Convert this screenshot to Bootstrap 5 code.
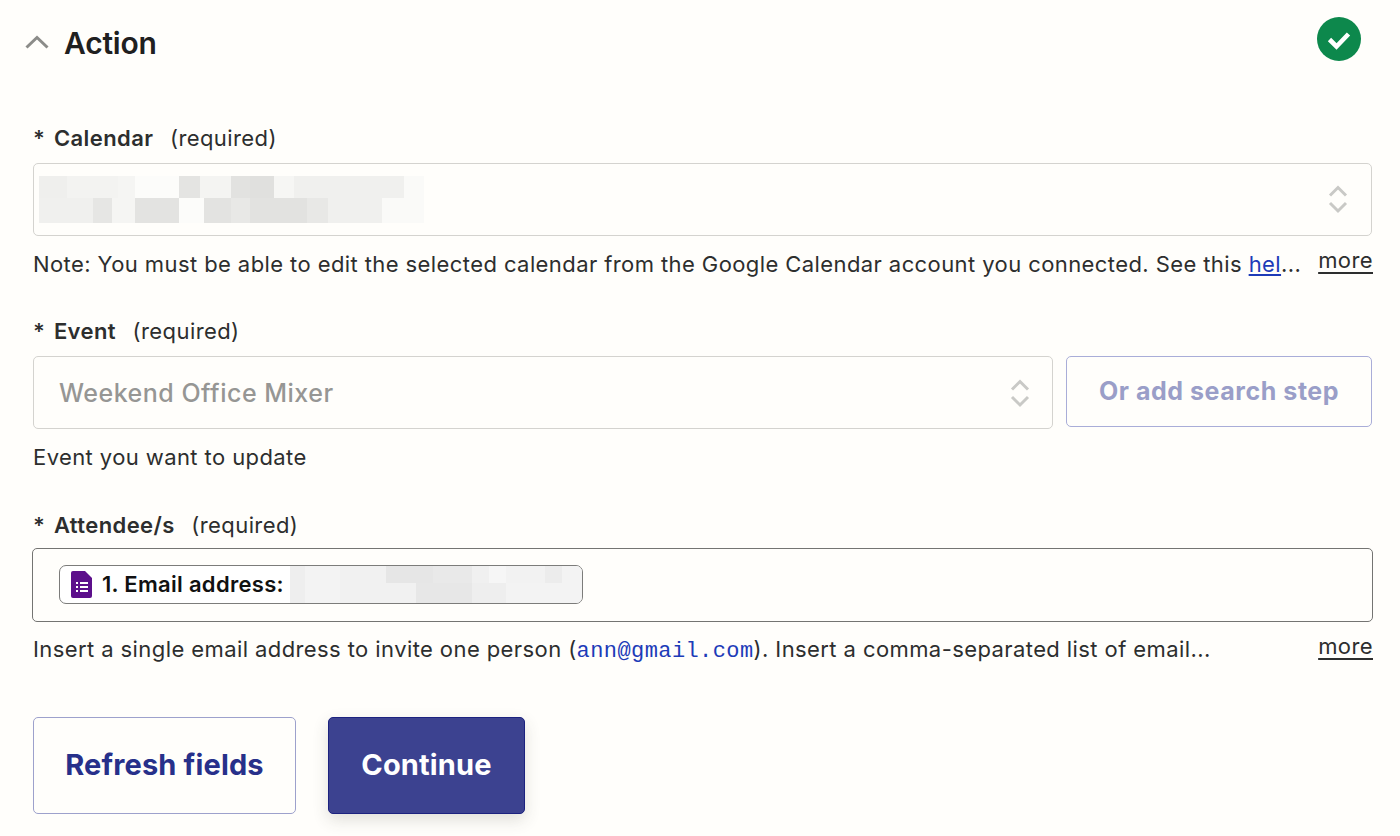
<!DOCTYPE html>
<html lang="en">
<head>
<meta charset="utf-8">
<title>Action</title>
<link rel="stylesheet" href="https://cdn.jsdelivr.net/npm/bootstrap@5.3.0/dist/css/bootstrap.min.css">
<style>
html,body{height:836px;overflow:hidden}
body{background:#fffefb;color:#2d2e2e;font-family:Inter,"Liberation Sans",sans-serif;font-size:22px;line-height:30px;letter-spacing:.41px}
.page-wrap{padding:17px 28px 0 33px}
.step-head{height:44px;margin-right:11px;margin-left:-8px;letter-spacing:0}
.step-title{font-size:30px;font-weight:600;line-height:44px;color:#1f2020;margin:0 0 0 15px;padding-top:8px;letter-spacing:-.2px}
.chev{width:24px;height:14px;display:block;margin-top:6px}
.check{width:44px;height:44px;display:block;margin-left:auto}
.fld-label{font-size:22px;line-height:30px;margin:0;height:30px}
.fld-label b{font-weight:600;margin-right:10px}
.fld-label i{font-style:normal;font-weight:600;margin-right:2px}
.f1{margin-top:62px}
.f2{margin-top:37px}
.f3{margin-top:38px}
.fake-select{height:73px;background:#fffefb;border:1px solid #d4d3cf;border-radius:5px;position:relative;margin-top:10px}
.updown{width:20px;height:30px;display:block}
.cal-blur{width:385px;height:47px;margin-left:5px;background:
linear-gradient(90deg,#f0f0ee 0 54px,#e6e6e4 54px 73px,#f5f5f3 73px 96px,#e3e3e1 96px 140px,#fcfcfa 140px 165px,#e3e3e1 165px 192px,#e8e8e6 192px 211px,#e2e2e0 211px 268px,#e8e8e6 268px 289px,#f0f0ee 289px 343px,#fafaf8 343px 385px) 0 100%/100% 25px no-repeat,
linear-gradient(90deg,#efefed 0 28px,#f3f3f1 28px 79px,#f5f5f3 79px 96px,#fcfcfa 96px 140px,#e4e4e2 140px 161px,#f4f4f2 161px 192px,#e2e2e0 192px 211px,#e0e0de 211px 235px,#f6f6f4 235px 255px,#f0f0ee 255px 365px,#fafaf8 365px 385px) 0 0/100% 22px no-repeat}
.sel-one{padding-right:23px}
.sel-one .updown{margin-top:-2px}
.sel-two{padding:0 22px 0 25px;flex:1 1 auto}
.placeholder-txt{font-size:25px;color:#969694;font-weight:500;line-height:30px;letter-spacing:.5px}
.helpline{font-size:22px;line-height:30px;margin-top:13px;color:#2d2e2e;white-space:nowrap}
.helpline a{color:#1d3bb8}
.more-link{color:#2d2e2e!important;line-height:24px;margin:-1px -1px 0 0;text-decoration:underline;text-underline-offset:4px}
.search-btn{width:306px;height:71px;margin-left:13px;background:#fffefb;border:1px solid #a9add8;border-radius:5px;color:#9a9ec8;font-size:25px;font-weight:650;padding:0;line-height:1;letter-spacing:.55px}
.search-btn:hover{background:#fffefb;color:#9a9ec8;border-color:#a9add8}
.row-two{margin-top:10px}
.row-two .fake-select{margin-top:0}
.attendee{margin:8px -1px 0 -1px;height:74px;border:1px solid #747472;border-radius:5px;padding:16px 0 0 26px}
.chip{width:524px;height:39px;background:#fff;border:1px solid #7c7c7a;border-radius:7px;padding-left:11px;font-size:22px;font-weight:600;color:#111;letter-spacing:.3px;overflow:hidden}
.chip svg{width:21px;height:27px;margin-right:10px;flex:none}
.chip-label{margin-top:-2px}
.chip-blur{flex:1 1 auto;height:37px;margin-left:6px;background:
linear-gradient(90deg,#eee 0 15px,#f3f3f3 15px 50px,#f1f1f1 50px 126px,#e7e7e7 126px 182px,#eee 182px 216px,#f3f3f3 216px 292px) 0 100%/100% 20px no-repeat,
linear-gradient(90deg,#eee 0 15px,#f3f3f3 15px 50px,#f1f1f1 50px 96px,#e6e6e6 96px 143px,#e9e9e9 143px 182px,#f0f0f0 182px 199px,#f6f6f6 199px 216px,#f2f2f2 216px 255px,#ececec 255px 272px,#f3f3f3 272px 292px) 0 0/100% 18px no-repeat}
.mono-link{font-family:"Liberation Mono",monospace;font-size:22px;color:#1d3bb8}
.help-last{margin-top:12px}
.help-last .more-link{margin-top:0}
.action-row{margin-top:50px;gap:32px}
.refresh-btn,.continue-btn{height:97px;font-size:29px;font-weight:650;border-radius:5px;padding:0 0 2px;line-height:1;letter-spacing:.15px}
.refresh-btn{width:263px;background:#fffefb;border:1px solid #9da1cc;color:#27308a}
.refresh-btn:hover{background:#fffefb;color:#27308a;border-color:#9da1cc}
.continue-btn{width:197px;background:#3c4290;border:1px solid #1c227f;color:#fff;box-shadow:0 6px 16px rgba(60,60,50,.16)}
.continue-btn:hover{background:#3c4290;color:#fff;border-color:#1c227f}
</style>
</head>
<body>
<div class="page-wrap">
  <div class="step-head d-flex align-items-center">
    <svg class="chev" viewBox="0 0 24 14" aria-hidden="true"><path d="M1.5 12.5 12 2.5l10.5 10" fill="none" stroke="#8c8c89" stroke-width="3"/></svg>
    <h1 class="step-title">Action</h1>
    <svg class="check" viewBox="0 0 44 44" aria-hidden="true"><circle cx="22" cy="22" r="22" fill="#0d884c"/><path d="M12.5 22.5l7 7 12-12.5" fill="none" stroke="#fff" stroke-width="4.6"/></svg>
  </div>

  <div class="f1">
    <p class="fld-label"><i>*</i> <b>Calendar</b> (required)</p>
    <div class="fake-select sel-one d-flex align-items-center justify-content-between">
      <div class="cal-blur"></div>
      <svg class="updown" viewBox="0 0 20 30" aria-hidden="true"><path d="M2 11.5 10 3.5l8 8M2 19l8 8 8-8" fill="none" stroke="#c9c9c6" stroke-width="3"/></svg>
    </div>
    <div class="helpline d-flex justify-content-between">
      <span>Note: You must be able to edit the selected calendar from the Google Calendar account you connected. See this <a href="#">hel</a>...</span>
      <a href="#" class="more-link">more</a>
    </div>
  </div>

  <div class="f2">
    <p class="fld-label"><i>*</i> <b>Event</b> (required)</p>
    <div class="row-two d-flex align-items-start">
      <div class="fake-select sel-two d-flex align-items-center justify-content-between">
        <span class="placeholder-txt">Weekend Office Mixer</span>
        <svg class="updown" viewBox="0 0 20 30" aria-hidden="true"><path d="M2 11.5 10 3.5l8 8M2 19l8 8 8-8" fill="none" stroke="#c9c9c6" stroke-width="3"/></svg>
      </div>
      <button type="button" class="btn search-btn">Or add search step</button>
    </div>
    <div class="helpline">Event you want to update</div>
  </div>

  <div class="f3">
    <p class="fld-label"><i>*</i> <b>Attendee/s</b> (required)</p>
    <div class="attendee">
      <div class="chip d-flex align-items-center">
        <svg viewBox="0 0 21 27" aria-hidden="true"><path d="M2 0h12l7 7v18a2 2 0 0 1-2 2H2a2 2 0 0 1-2-2V2a2 2 0 0 1 2-2z" fill="#5c0f8b"/><path d="M5 11h2v2H5zM9 11h8v2H9zM5 15h2v2H5zM9 15h8v2H9zM5 19h2v2H5zM9 19h8v2H9z" fill="#fff"/></svg>
        <span class="chip-label">1. Email address:</span>
        <div class="chip-blur"></div>
      </div>
    </div>
    <div class="helpline help-last d-flex justify-content-between">
      <span>Insert a single email address to invite one person (<span class="mono-link">ann@gmail.com</span>). Insert a comma-separated list of email...</span>
      <a href="#" class="more-link">more</a>
    </div>
  </div>

  <div class="action-row d-flex">
    <button type="button" class="btn refresh-btn">Refresh fields</button>
    <button type="button" class="btn continue-btn">Continue</button>
  </div>
</div>
<script src="https://cdn.jsdelivr.net/npm/bootstrap@5.3.0/dist/js/bootstrap.bundle.min.js"></script>
</body>
</html>
